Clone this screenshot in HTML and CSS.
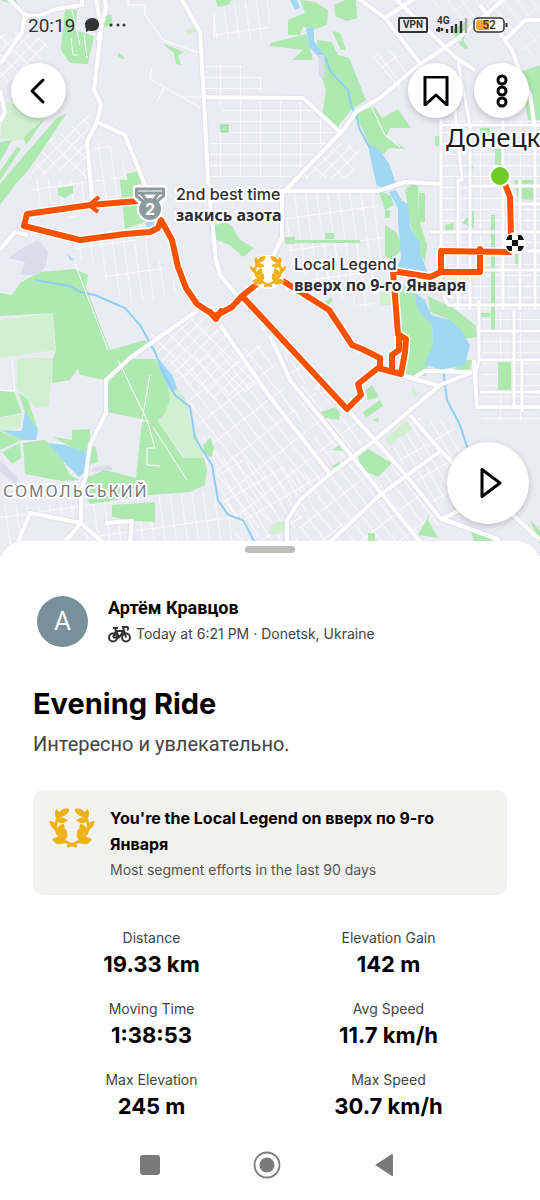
FILE: index.html
```html
<!DOCTYPE html>
<html lang="en">
<head>
  <meta charset="UTF-8" />
  <meta name="viewport" content="width=device-width, initial-scale=1.0"/>
  <title>Evening Ride</title>
  <link rel="stylesheet" href="styles.css">
</head>
<body>

  <svg class="defs" width="0" height="0" aria-hidden="true">
    <symbol id="laurel-half" viewBox="0 0 46 42" overflow="visible">
      <path d="M27 39C15 35 7 29 6 19Q6 12 10 7" fill="none" stroke="currentColor" stroke-width="3" stroke-linecap="round"/>
      <path d="M9 8C10 2 14 0 19 0C20 4 15 8 9 8ZM8 11C5 7 5 4 7 1C11 4 11 8 8 11ZM7 12C10 8 14 9 18 12C14 15 10 15 7 12ZM6 22C1 19 0 16 0 13C4 14 7 17 6 22ZM7 26C7 20 10 17 14 16C16 21 12 26 7 26ZM13 34C10 29 12 24 15 21C19 25 18 31 13 34ZM15 35C11 29 7 29 3 32C6 37 11 37 15 35Z" fill="currentColor" stroke="currentColor" stroke-width="1.2" stroke-linejoin="round"/>
    </symbol>
    <symbol id="laurel" viewBox="-2 -2 50 46">
      <use href="#laurel-half" width="46" height="42"/>
      <use href="#laurel-half" width="46" height="42" transform="translate(46 0) scale(-1 1)"/>
    </symbol>
  </svg>

  <section class="map">
    <svg class="map-canvas" viewBox="0 0 540 556" role="img" aria-label="Ride map">
      <defs>
        <pattern id="blocks" width="20" height="11" patternUnits="userSpaceOnUse"><path d="M0 0H20M0 0V11"/></pattern>
        <pattern id="slant" width="11" height="24" patternUnits="userSpaceOnUse" patternTransform="rotate(-38)"><path d="M0 0V24M0 0H11"/></pattern>
        <pattern id="steep" width="9" height="26" patternUnits="userSpaceOnUse" patternTransform="rotate(-30)"><path d="M0 0V26M0 0H9"/></pattern>
        <pattern id="rise" width="13" height="9" patternUnits="userSpaceOnUse" patternTransform="rotate(-45)"><path d="M0 0H13M0 0V9"/></pattern>
        <pattern id="tall" width="11" height="32" patternUnits="userSpaceOnUse" patternTransform="rotate(-8)"><path d="M0 0V32M0 0H11"/></pattern>
        <path id="ride" d="M150 200L90 205 27 214 24 226 80 240 125 234 150 232 158 228 161 220 172 240 178 267 186 288 197 304 215 316 232 307 242 296 262 280M210 312L216 319 221 311M242 296L347 409 361 395 358 384 378 368 401 374 405 352 406 339 398 334 393 271 430 277 441 272H480V249M441 272V251L510 252M380 358L362 349 352 345 329 310 275 276M380 358V368M392 369V355L399 350V336M505 184L510 197 511 236"/>
      </defs>
      <rect class="land" width="540" height="556"/>

      <!-- small streets -->
      <g>
        <path fill="url(#rise)" d="M0 35L22 30 52 45 35 68 0 85Z"/>
        <path fill="url(#rise)" d="M50 140L90 115 88 180 70 170 28 178Z"/>
        <path fill="url(#tall)" d="M94 140L118 150 132 180 94 178Z"/>
        <path fill="url(#blocks)" d="M220 98L300 98 335 134 290 178 212 178 208 150 222 125Z"/>
        <path fill="url(#blocks)" d="M203 65L240 65 266 80 258 97 205 97Z"/>
        <path fill="url(#tall)" d="M214 13L243 2 270 0V40L214 38Z"/>
        <path fill="url(#rise)" d="M333 138L360 150 350 178 297 178Z"/>
        <path fill="url(#tall)" d="M286 192L378 192 383 262 372 310 340 300 288 262Z"/>
        <path fill="url(#tall)" d="M30 180H118V200L32 205Z"/>
        <path fill="url(#tall)" d="M64 205H75V262H92L125 304 160 300 180 290 165 270 145 240 75 240Z"/>
        <path fill="url(#rise)" d="M150 335L195 312 225 335 262 388 215 400 160 360Z"/>
        <path fill="url(#slant)" d="M167 360L262 345 330 475 288 500 240 545 222 500 200 430 185 395Z"/>
        <path fill="url(#steep)" d="M210 455L330 475 287 540H262L225 508Z"/>
        <path fill="url(#steep)" d="M242 298L345 409 290 375 270 345Z"/>
        <path fill="url(#tall)" d="M85 545V505L210 490 250 545Z"/>
        <path fill="url(#tall)" d="M0 505H78V520L28 513 16 545H0Z"/>
        <path fill="url(#slant)" d="M290 380L350 410 442 520 425 545H290L330 475Z"/>
        <path fill="url(#steep)" d="M392 450L415 417 450 420 470 455 440 510Z"/>
        <path fill="url(#blocks)" d="M441 120H540V310H441Z"/>
        <path fill="url(#blocks)" d="M482 312H540V420H482Z"/>
        <path fill="url(#slant)" d="M372 55L392 48 410 75 392 88Z"/>
        <path fill="url(#slant)" d="M425 0L540 60V0Z" opacity=".6"/>
      </g>

      <path class="park-light" d="M5 102L38 108 45 118 20 141 0 138ZM0 320L53 313 55 350 0 358ZM17 358H53L49 406 35 408 17 388ZM165 373L185 398 192 425 203 450V458H185L158 421 170 400ZM385 439L407 420 412 429 390 445ZM380 292L392 295V305H380ZM185 30L195 27 202 30 187 35ZM0 418L22 414 20 429 0 430ZM270 525L286 520V532L270 535ZM412 385L418 395 413 398Z"/>
      <path class="park" d="M65 9L77 10 76 30 94 36 88 64 70 63 61 50 62 38ZM104 17L111 14 113 26 104 27ZM0 0H16L18 5 12 4ZM23 138L45 118 36 131 26 145ZM67 113L57 118 22 158 0 184V205L14 186 30 168ZM0 142L12 140 0 162ZM0 171L17 147 21 149 0 180ZM118 52L125 58 122 59 118 56ZM162 43L184 52 178 55 181 65 176 64 174 53ZM126 174L138 171 142 184 128 182ZM216 0H232L228 5 218 7Z"/>
      <path class="park" d="M288 20L305 13 300 0 315 2 328 10 327 25 315 29 303 27 300 35 288 35ZM334 5L345 0H356L357 18 347 21 335 16ZM270 43L306 34 313 60 292 60 303 50 270 46ZM317 40L332 42 338 55 349 58 366 100 351 110 335 130 322 117 326 90 320 72ZM332 31L340 33 346 50 341 50ZM354 112L375 107 382 118 398 109 411 128 390 128 386 137 406 149 389 148 384 154 372 150ZM453 30L468 20 467 33 463 40 455 37ZM458 43L463 40 468 48 465 49ZM520 72L540 65V120L528 120ZM480 128H490V135H480ZM495 149H502V165H495ZM467 168L474 165 471 173ZM435 136H441V146H435Z"/>
      <path class="park" d="M378 190L391 196 394 205 385 210ZM405 190L411 184 418 185 419 220 427 245 425 262 415 245 410 220ZM385 225L396 232 403 247 393 260 385 256ZM385 210H390V218H385ZM394 278L414 292 432 318 433 345 426 376 402 372 402 345 398 315ZM428 296L455 309 475 325 477 337 465 339 450 320 430 312ZM285 237H295V240H360V243H295V244H285ZM325 233H334V239H325ZM325 302L331 297 333 301 328 305ZM514 180H535V200L518 199ZM491 215H495V330H491ZM480 313H490V317H480ZM445 225L454 223 453 230H445ZM462 223L474 210V228ZM419 193H425V222H419ZM515 252H519V264H515ZM498 362H511V391H498ZM455 360H472L468 374 455 371Z"/>
      <path class="park" d="M120 180H138L136 199 145 203V222L125 229ZM58 188L73 186V193L65 198 58 195ZM209 227L225 222 232 226 240 240 254 248 243 257 230 245 217 240ZM0 293L12 295 20 283 40 272 75 269 88 275 86 287 104 335 110 350 145 340 150 347 112 372 105 380 80 375 78 368 70 380 52 383 53 358 56 350 53 313 0 316ZM105 380L133 359H155L166 375 170 400 164 415 155 422 107 412ZM142 422L157 420 183 458H204L207 470 205 485 190 492 150 495 90 504 82 490 85 478 105 470 136 478ZM203 445L210 438 214 447 212 457 205 455ZM0 391L14 392 22 413 0 417ZM18 392L28 400 38 430 32 432ZM0 431L22 440 0 450ZM2 452L20 443 21 458 12 464ZM23 443L45 440 60 455 70 475 80 480 62 481 25 474ZM53 437L72 440V430L90 429V445L96 447 98 462 90 465 80 452ZM112 505L155 502V522L135 521 112 517Z"/>
      <path class="park" d="M321 412L335 407 340 412 339 420 325 418ZM366 390L372 385 379 397 368 400ZM363 412L380 400 383 406 366 418ZM373 420L379 417 378 423ZM358 457L368 449 392 463 378 477 362 470ZM332 450L340 445 342 451ZM330 468L340 461 339 466ZM418 535L431 512 428 520 438 538ZM470 530L485 531 492 541H474ZM368 533H375V541H368ZM530 520L540 530V545ZM408 360H420L418 376 406 374Z"/>

      <path class="water" d="M290 0H297L300 8 295 10ZM306 28H314V41L327 58 322 60 309 47ZM368 145L378 148 390 165 397 188 388 189 377 186 373 170ZM389 192L396 190 402 201 408 204 411 230 420 242 420 252 428 274 418 277 396 270 401 258 400 240 398 225 398 208ZM414 292L425 300 431 315 450 320 461 330 470 345 465 365 440 370 424 364 433 345 432 325 418 310ZM0 430L22 431 25 411 38 430 36 440 22 440ZM48 443L65 445 88 453 87 470 79 477 65 463ZM158 358L173 376 177 389 171 392 160 370ZM146 222H154V227H146ZM67 254L74 260 70 260Z"/>
      <path class="river" d="M325 57L331 72 348 90 351 105 356 115 360 130 370 148M35 280L70 286 80 292 95 295 125 308 140 325 155 352 160 365 175 395 190 407 195 438 212 465 218 500 228 515 243 520 256 545M443 368L447 400 460 425 468 450"/>
      <path class="haze" d="M8 258L25 246 38 240 48 252 46 265 38 275 20 275 25 262ZM0 460L18 478 16 485 0 472ZM92 468L110 465 113 470 92 472ZM318 55H324L325 78 319 76Z"/>

      <!-- main roads -->
      <g class="roads">
        <path d="M8 -2L25 15 22 32 0 64M25 15L38 16 56 9 82 5V-2M96 -2L101 30 94 90 101 104 97 122 125 135 149 195M105 -2L106 8 98 40M97 122L87 142 92 200M181 -2L200 32 204 100 208 180 216 260 220 275 245 305M204 97L303 98 340 132M0 90L5 112 0 122M358 -2L385 18 420 63M395 -2L455 57 475 70M282 240V194L345 128 356 112 380 98 415 68 460 37 505 -2M415 -2L385 18M480 5L512 50 520 72 530 95 535 128M505 40L525 20 540 20M270 191H378L405 182 440 184M282 238L270 262M0 250L15 232 28 235"/>
        <path class="city" d="M441 119V290L448 305H540M458 62L470 125 470 310M453 90L462 180 458 180V310M503 120V310M520 180V310M535 128V310M441 125H540M441 145H540M470 186H540M510 204H540M430 232H540M441 251H540M441 270H540M479 300V360L474 380M514 310V405M522 360V412M480 331H540M480 360H540M480 392H540"/>
        <path d="M474 360L477 407H540M270 335L290 380 355 460 420 542M347 409L375 440 410 480 440 518M287 542V520L300 500 330 474 375 440 440 385 472 372M220 325L270 397 330 474M330 542L380 495 442 450M410 415L440 450 465 475M440 520L480 500M440 518L500 540M400 375L440 386M415 377L425 371 470 372M510 512L540 540M198 310L130 358 106 380V413L90 445 85 480 81 490V523L65 542M81 523L30 513 18 542M81 523L102 542M105 523L132 521 130 542"/>
      </g>
      <path class="paths" d="M118 360L147 420 155 448 147 448 147 465 160 466M153 427L187 480M150 375L142 420M75 264L108 350M128 0V5H145V15L163 40 200 53M152 67L150 79 201 108M164 88L157 102M180 97H201M214 13V38M372 55L400 88M372 108L385 135 400 147M0 390L15 391 12 360M72 10L80 45M84 35L87 58M71 38L73 55H78"/>
      <rect x="221" y="125" width="7" height="7" fill="#aee9b0" stroke="#8fd49a"/>

      <text class="town" x="446" y="147">Донецк</text>
      <text class="district" x="3" y="497">СОМОЛЬСЬКИЙ</text>

      <use href="#ride" class="route route-edge"/>
      <use href="#ride" class="route"/>
      <path class="arrow" d="M99 197L89 205 98 212"/>

      <circle cx="500" cy="176" r="10" fill="#6fcb26" stroke="#fff" stroke-width="2"/>
      <g>
        <circle cx="515" cy="243" r="11" fill="#fff"/>
        <path d="M512 240h6v6h-6ZM506 240a9 9 0 0 1 3-5l3 0v5ZM518 240v-5h3a9 9 0 0 1 3 5ZM506 246h6v5h-3a9 9 0 0 1-3-5ZM518 246h6a9 9 0 0 1-3 5h-3Z" fill="#111"/>
      </g>

      <!-- segment medal -->
      <g stroke-linejoin="round">
        <path d="M136 188H164V197L158 203A10 10 0 1 1 142 203L136 197Z" fill="#fff" stroke="#fff" stroke-width="6"/>
        <path d="M136.500 189H163.500V196L156 202H144L136.500 196ZM137 193H163M141 193L147 201M159 193L153 201" fill="#fff" stroke="#8d9a9e" stroke-width="3"/>
        <circle cx="150" cy="209" r="11" fill="#8d9a9e"/>
        <text class="medal-rank" x="150" y="215">2</text>
      </g>
      <circle cx="268" cy="272" r="17" fill="#fff"/>
      <use class="laurel laurel-edge" href="#laurel" x="249" y="255" width="38" height="35"/>
      <use class="laurel" href="#laurel" x="249" y="255" width="38" height="35"/>

      <g class="segment">
        <text x="176" y="200">2nd best time</text>
        <text class="cyr" x="176" y="221">закись азота</text>
        <text x="294" y="270">Local Legend</text>
        <text class="cyr" x="294" y="291">вверх по 9-го Января</text>
      </g>
    </svg>

    <div class="status-bar">
      <span class="clock">20:19</span>
      <svg width="44" height="16" viewBox="0 0 44 16" aria-hidden="true">
        <path d="M7 1C12 1 14 4 14 7.500S12 14 7 14Q5 14 4 13.500L1 15V12Q0 10 0 7.500C0 4 3 1 7 1Z" fill="#333"/>
        <circle cx="26" cy="8" r="1.500" fill="#333"/><circle cx="33" cy="8" r="1.500" fill="#333"/><circle cx="39" cy="8" r="1.500" fill="#333"/>
      </svg>
      <span class="vpn">VPN</span>
      <svg class="signal" width="32" height="18" viewBox="0 0 32 18" aria-hidden="true">
        <text class="net" x="1" y="8">4G</text>
        <path d="M0 14H2M3 11V16M6 12V15M11 17V13M16 17V10M20 17V8M25 17V5" stroke="#333" stroke-width="2.400"/>
        <path d="M30 17V2" stroke="#aaa" stroke-width="2.400"/>
      </svg>
      <svg width="36" height="18" viewBox="0 0 36 18" aria-hidden="true">
        <rect x="1" y="2" width="30" height="14" rx="4" fill="#fff" stroke="#333" stroke-width="1.500"/>
        <path d="M6 4H16V14H6Q3 14 3 11V7Q3 4 6 4Z" fill="#f5a623"/>
        <path d="M33.500 7V11" stroke="#333" stroke-width="2"/>
        <text class="charge" x="16" y="13">52</text>
      </svg>
    </div>

    <div class="map-controls">
      <button class="round back" aria-label="Back">
        <svg width="28" height="28" viewBox="0 0 28 28"><path d="M18 3L7 14 18 25"/></svg>
      </button>
      <button class="round" aria-label="Save">
        <svg width="28" height="30" viewBox="0 0 28 30"><path d="M3 1H25V29L14 19 3 29Z"/></svg>
      </button>
      <button class="round" aria-label="More options">
        <svg width="14" height="34" viewBox="0 0 14 34"><circle cx="7" cy="6" r="4"/><circle cx="7" cy="17" r="4"/><circle cx="7" cy="28" r="4"/></svg>
      </button>
    </div>

    <button class="round play" aria-label="Play flyover">
      <svg width="32" height="32" viewBox="0 0 32 32"><path d="M10 2.500V29.500L28 16Z"/></svg>
    </button>
  </section>

  <main class="sheet">
    <div class="handle"></div>

    <div class="athlete">
      <div class="avatar">A</div>
      <div>
        <div class="name" lang="ru">Артём Кравцов</div>
        <div class="when">
          <svg width="23" height="17" viewBox="0 0 23 17" aria-hidden="true">
            <circle cx="5" cy="11.500" r="4"/><circle cx="18" cy="11.500" r="4"/>
            <path d="M5 11.500L8 5H15.500L11 11.500H5M8 5L11 11.500M5 2H10M7 2L8 5M18 11.500L15 1H19.500Q21 3 19 4"/>
          </svg>
          Today at 6:21 PM · Donetsk, Ukraine
        </div>
      </div>
    </div>

    <h1>Evening Ride</h1>
    <p class="description" lang="ru">Интересно и увлекательно.</p>

    <div class="legend-card">
      <svg class="laurel" width="48" height="44" aria-hidden="true"><use href="#laurel"/></svg>
      <div>
        <h2>You're the Local Legend on вверх по 9-го Января</h2>
        <p>Most segment efforts in the last 90 days</p>
      </div>
    </div>

    <dl class="stats">
      <div><dt>Distance</dt><dd>19.33 km</dd></div>
      <div><dt>Elevation Gain</dt><dd>142 m</dd></div>
      <div><dt>Moving Time</dt><dd>1:38:53</dd></div>
      <div><dt>Avg Speed</dt><dd>11.7 km/h</dd></div>
      <div><dt>Max Elevation</dt><dd>245 m</dd></div>
      <div><dt>Max Speed</dt><dd>30.7 km/h</dd></div>
    </dl>
  </main>

  <nav class="system-nav">
    <button aria-label="Recent apps"><svg width="28" height="28" viewBox="0 0 28 28"><rect x="4" y="4" width="20" height="20" rx="3"/></svg></button>
    <button aria-label="Home"><svg width="28" height="28" viewBox="0 0 28 28"><circle cx="14" cy="14" r="12.500" fill="none" stroke="#7a7a7a" stroke-width="1.800"/><circle cx="14" cy="14" r="7.500"/></svg></button>
    <button aria-label="Back"><svg width="28" height="28" viewBox="0 0 28 28"><path d="M5 14L22 3Q23 3 23 4V24Q23 25 22 25Z"/></svg></button>
  </nav>

</body>
</html>
```
FILE: styles.css
```css
* {
  box-sizing: border-box;
}
body {
  margin: 0;
  background: #fff;
  color: #000;
  font-family: Inter, "Noto Sans", sans-serif;
}
button {
  padding: 0;
  border: none;
  background: none;
  cursor: pointer;
}
.defs {
  position: absolute;
}
.laurel {
  color: #efb01a;
}

/* map */
.map {
  position: relative;
}
.map-canvas {
  display: block;
  width: 100%;
  height: auto;
}
.land {
  fill: #ebebf4;
}
pattern path {
  fill: none;
  stroke: #fff;
  stroke-width: 1.5;
}
.park {
  fill: #aee9b0;
}
.park-light {
  fill: #d0f0d0;
}
.water {
  fill: #a0d8f4;
}
.river {
  fill: none;
  stroke: #8fd0f2;
  stroke-width: 2;
}
.haze {
  fill: #d9dde9;
}
.roads {
  fill: none;
  stroke: #fff;
  stroke-width: 4;
  stroke-linejoin: round;
  filter: drop-shadow(0 0 1px #d2d3de);
}
.city {
  stroke-width: 3;
}
.paths {
  fill: none;
  stroke: #fff;
  stroke-width: 1;
}
.town,
.district,
.segment {
  paint-order: stroke;
  stroke: #fff;
  stroke-width: 4px;
  stroke-linejoin: round;
}
.town {
  font: 26px "Noto Sans", sans-serif;
  fill: #1c1c1c;
}
.district {
  font: 16px "Noto Sans", sans-serif;
  letter-spacing: 2px;
  fill: #77777f;
}
.segment {
  font: 500 16px Inter, sans-serif;
  fill: #2d2d33;
}
.cyr {
  font: 700 16px "Noto Sans", sans-serif;
}
.route {
  fill: none;
  stroke: #fc5200;
  stroke-width: 6;
  stroke-linejoin: round;
  stroke-linecap: round;
}
.route-edge {
  stroke: #fff;
  stroke-width: 9;
}
.arrow {
  fill: none;
  stroke: #fc5200;
  stroke-width: 4;
}
.laurel-edge {
  color: #fff;
  filter: drop-shadow(0 0 2px #fff);
}
.medal-rank {
  font: 700 16px Inter, sans-serif;
  fill: #fff;
  text-anchor: middle;
}

.status-bar {
  position: absolute;
  top: 14px;
  left: 28px;
  right: 31px;
  display: flex;
  align-items: center;
  height: 22px;
  color: #333;
}
.clock {
  margin-right: 10px;
  font: 400 19px Roboto, sans-serif;
}
.vpn {
  margin-left: auto;
  padding: 0 3px;
  border: 2px solid #333;
  border-radius: 2px;
  font: 700 10px/12px Roboto, sans-serif;
}
.signal {
  margin: 0 5px 0 8px;
}
.net {
  font: 700 10px Roboto, sans-serif;
  fill: #333;
}
.charge {
  font: 500 12px Roboto, sans-serif;
  fill: #333;
  text-anchor: middle;
}
.map-controls {
  position: absolute;
  top: 63px;
  left: 11px;
  right: 11px;
  display: flex;
  gap: 11px;
}
.round {
  display: flex;
  align-items: center;
  justify-content: center;
  width: 55px;
  height: 55px;
  border-radius: 50%;
  background: #fff;
  box-shadow: 0 2px 6px rgba(0,0,0,0.2);
}
.round svg {
  fill: none;
  stroke: #000;
  stroke-width: 3;
  stroke-linejoin: round;
  stroke-linecap: round;
}
.back {
  margin-right: auto;
}
.play {
  position: absolute;
  right: 11px;
  bottom: 32px;
  width: 82px;
  height: 82px;
}

/* activity sheet */
.sheet {
  position: relative;
  margin-top: -15px;
  padding: 5px 33px 0;
  border-radius: 24px 24px 0 0;
  background: #fff;
}
.handle {
  width: 50px;
  height: 7px;
  margin: 0 auto 42px;
  border-radius: 4px;
  background: #bfbdb8;
}
.athlete {
  display: flex;
  align-items: center;
  gap: 20px;
  padding-left: 4px;
  line-height: 26px;
}
.avatar {
  width: 51px;
  height: 51px;
  border-radius: 50%;
  background: #78909c;
  color: #fff;
  font: 26px/51px Roboto, sans-serif;
  text-align: center;
}
.name {
  font-family: Roboto, sans-serif;
  font-size: 18px;
  font-weight: 700;
}
.when {
  display: flex;
  align-items: center;
  gap: 5px;
  color: #444;
  font-size: 14px;
}
.when svg {
  fill: none;
  stroke: #333;
  stroke-width: 2;
}
h1 {
  margin: 37px 0 6px;
  font-size: 29px;
  line-height: 40px;
}
.description {
  margin: 0 0 32px;
  color: #444;
  font: 20px/28px Roboto, sans-serif;
}
.legend-card {
  display: flex;
  align-items: flex-start;
  gap: 14px;
  padding: 15px 30px 12px 15px;
  border-radius: 10px;
  background: #f2f2f0;
  line-height: 26px;
}
.legend-card svg {
  flex: none;
  margin-top: 2px;
}
h2 {
  margin: 0;
  font-size: 16px;
  font-weight: 700;
}
.legend-card p {
  margin: 0;
  color: #555;
  font-size: 14px;
}
.stats {
  display: grid;
  grid-template-columns: 1fr 1fr;
  row-gap: 19px;
  margin: 33px 0 0;
  text-align: center;
}
dt {
  color: #444;
  font-size: 14px;
  line-height: 20px;
}
dd {
  margin: 0;
  font-size: 22px;
  font-weight: 700;
  line-height: 32px;
}

.system-nav {
  display: flex;
  justify-content: center;
  gap: 89px;
  margin-top: 8px;
  padding: 21px 6px 21px 0;
}
.system-nav svg {
  display: block;
  fill: #7a7a7a;
}
```
